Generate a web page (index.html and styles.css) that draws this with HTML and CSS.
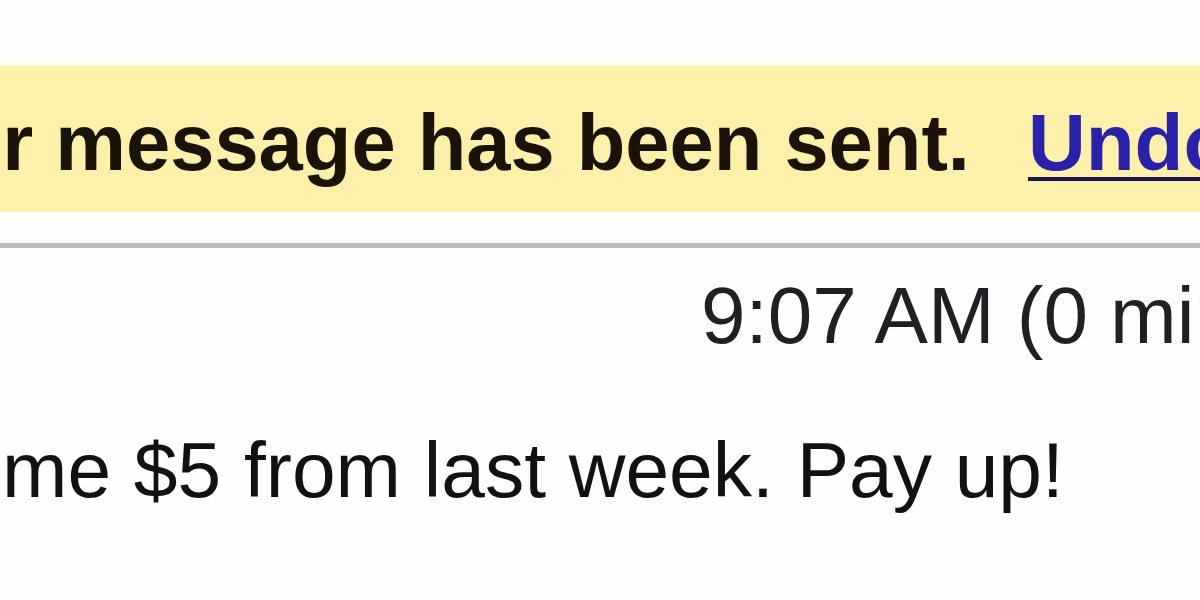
FILE: index.html
```html
<!DOCTYPE html>
<html lang="en">
<head>
<meta charset="utf-8">
<title>Your message has been sent</title>
<link rel="stylesheet" href="styles.css">
</head>
<body>
<div class="page">
  <div class="notice">
    <span class="notice-text">Your message has been sent.</span><a class="undo" href="#">Undo</a>
  </div>
  <div class="divider"></div>
  <div class="meta"><span class="time">9:07 AM (0 minutes ago)</span></div>
  <div class="message"><span class="body-text">me $5 from last week. Pay up!</span></div>
</div>
</body>
</html>
```

FILE: styles.css
```css
html, body {
  margin: 0;
  padding: 0;
  background: #fefefe;
}

.page {
  width: 1200px;
  height: 600px;
  overflow: hidden;
  font-family: "Liberation Sans", Arial, sans-serif;
  font-size: 80px;
  line-height: 80px;
  white-space: nowrap;
  padding-top: 66px;
  box-sizing: border-box;
}

.notice {
  background: #fcf0ab;
  padding: 37px 0 29px;
  box-shadow: 0 -3px 3px rgba(250, 248, 210, 0.6);
}

.notice-text {
  display: inline-block;
  margin-left: -142px;
  font-size: 79.5px;
  font-weight: bold;
  color: #1b1209;
}

.undo {
  margin-left: 58px;
  font-weight: bold;
  color: #2b20a8;
  text-decoration: underline;
  text-decoration-color: #1a1850;
  text-decoration-thickness: 4px;
  text-underline-offset: 7px;
}

.divider {
  margin-top: 31px;
  height: 5px;
  background: #bcbcbc;
}

.meta {
  margin-top: 28px;
  padding-left: 701px;
  color: #1f1f24;
}

.message {
  margin-top: 74px;
  color: #111111;
}

.body-text {
  display: inline-block;
  margin-left: 2px;
  font-size: 78.5px;
  word-spacing: 1px;
}
```
